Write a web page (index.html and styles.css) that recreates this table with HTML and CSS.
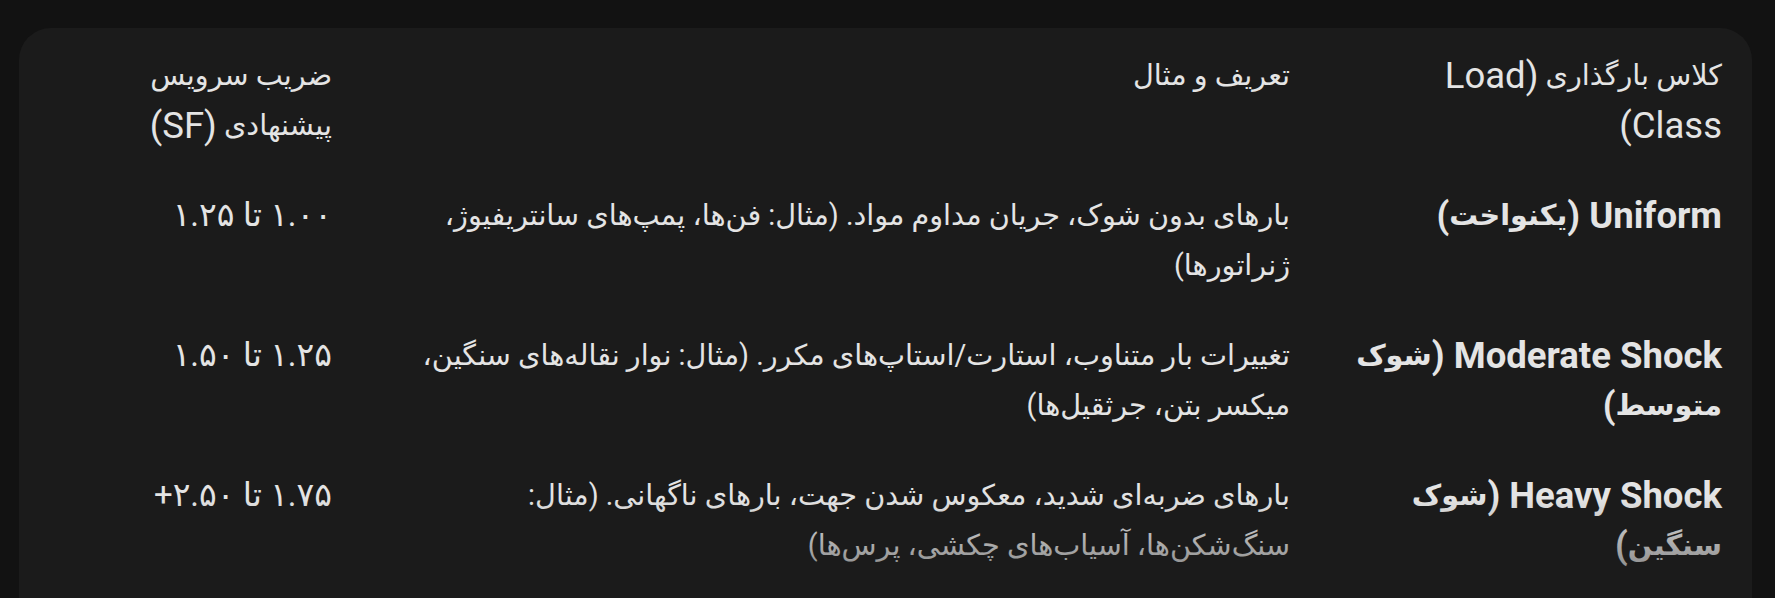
FILE: index.html
```html
<!DOCTYPE html>
<html lang="fa" dir="rtl">
<head>
<meta charset="utf-8">
<title>Service Factor</title>
<link rel="stylesheet" href="styles.css">
</head>
<body>
<div class="card">
  <div class="table">
    <div class="cell c1">کلاس بارگذاری <span class="en">(Load Class)</span></div>
    <div class="cell c2">تعریف و مثال</div>
    <div class="cell c3">ضریب سرویس پیشنهادی <span class="en">(SF)</span></div>

    <div class="cell c1 strong"><span class="en">Uniform (</span>یکنواخت<span class="en">)</span></div>
    <div class="cell c2">بارهای بدون شوک، جریان مداوم مواد. (مثال: فن‌ها، پمپ‌های سانتریفیوژ، ژنراتورها)</div>
    <div class="cell c3 num">۱.۰۰ تا ۱.۲۵</div>

    <div class="cell c1 strong"><span class="en">Moderate Shock (</span>شوک متوسط<span class="en">)</span></div>
    <div class="cell c2">تغییرات بار متناوب، استارت/استاپ‌های مکرر. (مثال: نوار نقاله‌های سنگین، میکسر بتن، جرثقیل‌ها)</div>
    <div class="cell c3 num">۱.۲۵ تا ۱.۵۰</div>

    <div class="cell c1 strong"><span class="en">Heavy Shock (</span>شوک سنگین<span class="en">)</span></div>
    <div class="cell c2">بارهای ضربه‌ای شدید، معکوس شدن جهت، بارهای ناگهانی. (مثال: سنگ‌شکن‌ها، آسیاب‌های چکشی، پرس‌ها)</div>
    <div class="cell c3 num">۱.۷۵ تا ۲.۵۰+</div>
  </div>
</div>
</body>
</html>
```

FILE: styles.css
```css
html, body {
  margin: 0;
  padding: 0;
  background: #121212;
  height: 100%;
  overflow: hidden;
}

body {
  font-family: Roboto, "Liberation Sans", "DejaVu Sans", sans-serif;
  color: #e4e4e4;
  font-size: 28.7px;
  line-height: 50px;
}

.card {
  position: relative;
  margin: 28px 23px 0 19px;
  background: #1b1b1b;
  border-radius: 32px 32px 0 0;
  padding: 22px 30px 40px 30px;
  height: calc(100vh - 28px);
  box-sizing: border-box;
  overflow: hidden;
}

.card::after {
  content: "";
  position: absolute;
  left: 0;
  right: 0;
  bottom: 0;
  height: 100px;
  background: linear-gradient(to bottom, rgba(27,27,27,0) 0%, rgba(27,27,27,0.6) 100%);
  pointer-events: none;
}

.table {
  display: grid;
  grid-template-columns: 372px 898px 1fr;
  column-gap: 60px;
  row-gap: 40px;
}

.cell {
  text-align: right;
}

.c2 {
  padding-left: 30px;
}

.en {
  font-family: Roboto, "Liberation Sans", sans-serif;
  font-size: 36.5px;
  line-height: 1;
  vertical-align: -3px;
}

.num {
  font-size: 33px;
}

.strong {
  font-weight: 700;
}
```
